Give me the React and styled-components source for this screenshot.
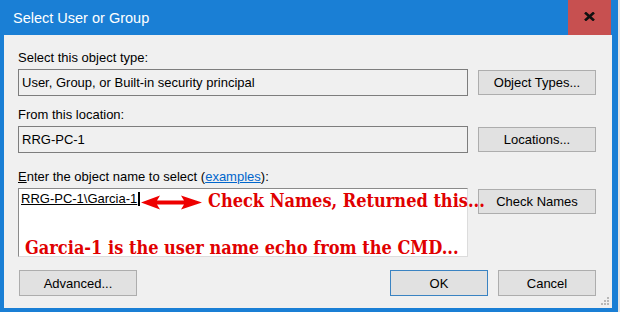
import React from "react";
import styled, { createGlobalStyle } from "styled-components";

const Global = createGlobalStyle`
  html, body { margin: 0; padding: 0; overflow: hidden; background: #ffffff; }
  * { box-sizing: border-box; }
`;

const UI = `"Liberation Sans", Arial, sans-serif`;

const Frame = styled.div`
  width: 620px;
  height: 312px;
  background: #1a7fd5;
  border-right: 2px solid #e4e4e4;
  padding-bottom: 4px;
  display: flex;
  flex-direction: column;
  font-family: ${UI};
`;

const TitleBar = styled.div`
  height: 35px;
  display: flex;
  align-items: center;
  padding-left: 13px;
  flex-shrink: 0;
`;

const Title = styled.div`
  color: #ffffff;
  font-size: 14.5px;
  letter-spacing: 0;
  margin-top: 1px;
`;

const CloseButton = styled.div`
  margin-left: auto;
  margin-right: 7px;
  width: 43px;
  height: 35px;
  background: #c75050;
  display: flex;
  align-items: center;
  justify-content: center;
  padding-bottom: 3px;
`;

const Client = styled.div`
  flex: 1;
  margin: 0 6px 0 4px;
  background: #f0f0f0;
  padding: 15px 16px 12px 14px;
  display: flex;
  flex-direction: column;
  position: relative;
`;

const Label = styled.div`
  font-size: 13px;
  line-height: 16px;
  color: #000;
  margin-top: ${(p) => p.$gap || 0}px;
  margin-bottom: 3px;
  white-space: nowrap;
  u { text-decoration: underline; }
`;

const Link = styled.span`
  color: #0066cc;
  text-decoration: underline;
`;

const FieldRow = styled.div`
  display: grid;
  grid-template-columns: 1fr 118px;
  column-gap: 10px;
  align-items: ${(p) => p.$align || "center"};
  position: relative;
`;

const TextBox = styled.div`
  height: 27px;
  border: 1px solid #7d7d7d;
  background: #f0f0f0;
  padding-left: 3px;
  display: flex;
  align-items: center;
  font-size: 13px;
  color: #000;
  white-space: nowrap;
`;

const NameArea = styled.div`
  height: 69px;
  background: #ffffff;
  border-top: 1px solid #8a8a8a;
  border-left: 1px solid #8a8a8a;
  border-right: 1px solid #dcdcdc;
  border-bottom: 1px solid #dcdcdc;
  padding: 2px 0 0 2px;
  font-size: 13px;
  color: #000;
`;

const Resolved = styled.span`
  text-decoration: underline;
  line-height: 16px;
`;

const Caret = styled.span`
  display: inline-block;
  width: 1.5px;
  height: 14px;
  background: #000;
  vertical-align: -3px;
  margin-left: 1px;
`;

const Button = styled.div`
  height: ${(p) => p.$h || 25}px;
  width: ${(p) => (p.$w ? `${p.$w}px` : "auto")};
  margin-top: ${(p) => p.$mt || 0}px;
  background: #e1e1e1;
  border: 1px solid ${(p) => (p.$primary ? "#3a83c2" : "#adadad")};
  display: flex;
  align-items: center;
  justify-content: center;
  font-size: 13px;
  color: #000;
  white-space: nowrap;
`;

const ButtonBar = styled.div`
  margin-top: 13px;
  display: flex;
  align-items: center;
  gap: 10px;
  padding-left: 1px;
`;

const Spacer = styled.div`
  flex: 1;
`;

const Annotation = styled.div`
  position: absolute;
  left: 0;
  top: 0;
  right: 0;
  bottom: 0;
  pointer-events: none;
  z-index: 2;
`;

const Arrow = styled.svg`
  position: absolute;
  left: 122px;
  top: 7px;
`;

const RedNote = styled.div`
  position: absolute;
  left: ${(p) => p.$x}px;
  top: ${(p) => p.$y}px;
  font-family: "DejaVu Serif Condensed", "DejaVu Serif", serif;
  font-stretch: condensed;
  font-weight: bold;
  font-size: 18px;
  line-height: 18px;
  color: #e00000;
  white-space: nowrap;
`;

const Grip = styled.svg`
  position: absolute;
  right: 3px;
  bottom: 3px;
`;

export default function App() {
  return (
    <>
      <Global />
      <Frame>
        <TitleBar>
          <Title>Select User or Group</Title>
          <CloseButton>
            <svg width="11" height="9" viewBox="0 0 11 9">
              <path d="M1 0.5 L10 8.5 M10 0.5 L1 8.5" stroke="#111" strokeWidth="2.6" strokeLinecap="butt" />
            </svg>
          </CloseButton>
        </TitleBar>
        <Client>
          <Label>Select this object type:</Label>
          <FieldRow>
            <TextBox>User, Group, or Built-in security principal</TextBox>
            <Button>Object Types...</Button>
          </FieldRow>
          <Label $gap={11}>From this location:</Label>
          <FieldRow>
            <TextBox>RRG-PC-1</TextBox>
            <Button>Locations...</Button>
          </FieldRow>
          <Label $gap={16}>
            <u>E</u>nter the object name to select (<Link>examples</Link>):
          </Label>
          <FieldRow $align="start">
            <NameArea>
              <Resolved>RRG-PC-1\Garcia-1</Resolved>
              <Caret />
            </NameArea>
            <Button $mt={1}>Check Names</Button>
            <Annotation>
              <Arrow width="64" height="16" viewBox="0 0 64 16">
                <path
                  d="M1 7.5 L20 0.5 L17 5.5 L44 5.5 L41 0.5 L62 7.5 L41 14.5 L44 9.5 L17 9.5 L20 14.5 Z"
                  fill="#ee0000"
                />
              </Arrow>
              <RedNote $x={190} $y={4}>Check Names, Returned this...</RedNote>
              <RedNote $x={7} $y={51}>Garcia-1 is the user name echo from the CMD...</RedNote>
            </Annotation>
          </FieldRow>
          <ButtonBar>
            <Button $w={118} $h={26}>Advanced...</Button>
            <Spacer />
            <Button $w={98} $h={26} $primary>OK</Button>
            <Button $w={98} $h={26}>Cancel</Button>
          </ButtonBar>
          <Grip width="10" height="10" viewBox="0 0 10 10">
            <g fill="#b8b8b8">
              <rect x="8" y="2" width="2" height="2" />
              <rect x="5" y="5" width="2" height="2" />
              <rect x="8" y="5" width="2" height="2" />
              <rect x="2" y="8" width="2" height="2" />
              <rect x="5" y="8" width="2" height="2" />
              <rect x="8" y="8" width="2" height="2" />
            </g>
          </Grip>
        </Client>
      </Frame>
    </>
  );
}
